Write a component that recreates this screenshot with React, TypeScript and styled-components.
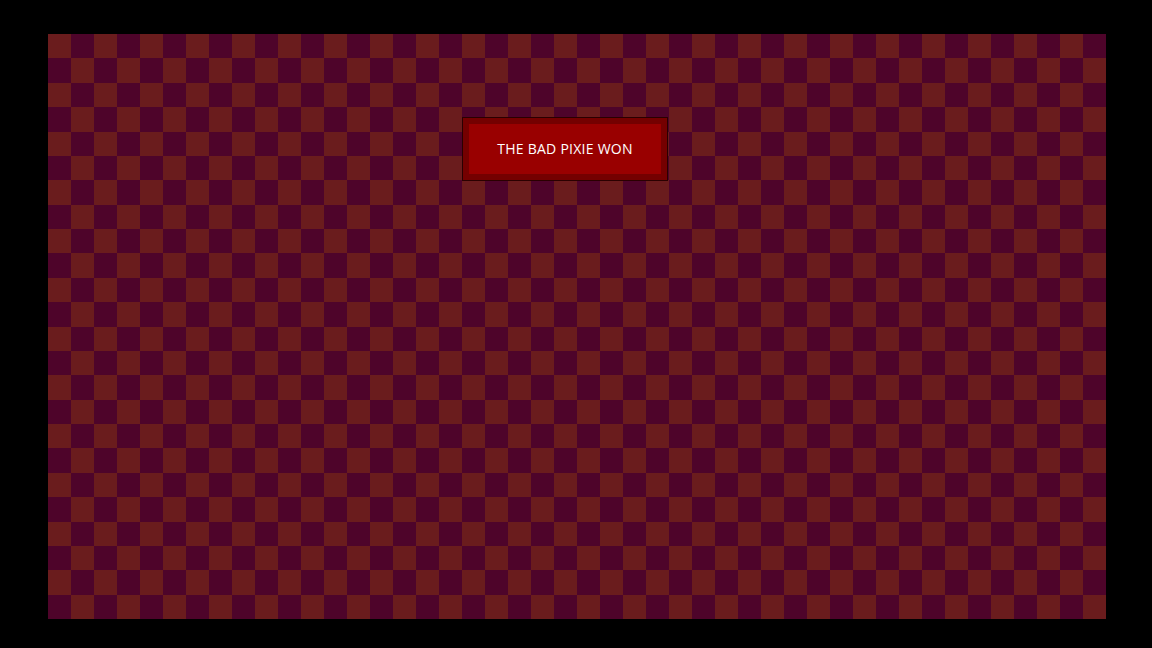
import React from "react";
import styled, { createGlobalStyle } from "styled-components";

const COLS = 46;
const ROWS = 24;

const GlobalStyle = createGlobalStyle`
  html, body {
    margin: 0;
    padding: 0;
    background: #000;
    width: 100%;
    height: 100%;
    overflow: hidden;
  }
  #root {
    width: 100%;
    height: 100%;
  }
`;

const Screen = styled.div`
  width: 100%;
  height: 100%;
  box-sizing: border-box;
  padding: 34px 46px 29px 48px;
  display: flex;
`;

const Board = styled.div`
  position: relative;
  flex: 1;
  display: grid;
  grid-template-columns: repeat(${COLS}, 1fr);
  grid-template-rows: repeat(${ROWS}, 1fr);
`;

const Cell = styled.div<{ $dark: boolean }>`
  background: ${(p) => (p.$dark ? "#4e042a" : "#6a1c1d")};
`;

// status message floating over the board
const Banner = styled.div`
  position: absolute;
  left: 414px;
  top: 83px;
  width: 206px;
  height: 64px;
  box-sizing: border-box;
  border: 1px solid #2a0000;
  background: #740000;
  padding: 6px;
  display: flex;
`;

const BannerInner = styled.div`
  flex: 1;
  background: #990000;
  display: flex;
  align-items: center;
  justify-content: center;
  padding-bottom: 2px;
  color: #fff;
  font-family: "Open Sans", "Liberation Sans", sans-serif;
  font-size: 14px;
  letter-spacing: 0.25px;
`;

export default function App() {
  const cells = [];
  for (let r = 0; r < ROWS; r++) {
    for (let c = 0; c < COLS; c++) {
      cells.push(<Cell key={`${r}-${c}`} $dark={(r + c) % 2 === 1} />);
    }
  }
  return (
    <>
      <GlobalStyle />
      <Screen>
        <Board>
          {cells}
          <Banner>
            <BannerInner>THE BAD PIXIE WON</BannerInner>
          </Banner>
        </Board>
      </Screen>
    </>
  );
}
